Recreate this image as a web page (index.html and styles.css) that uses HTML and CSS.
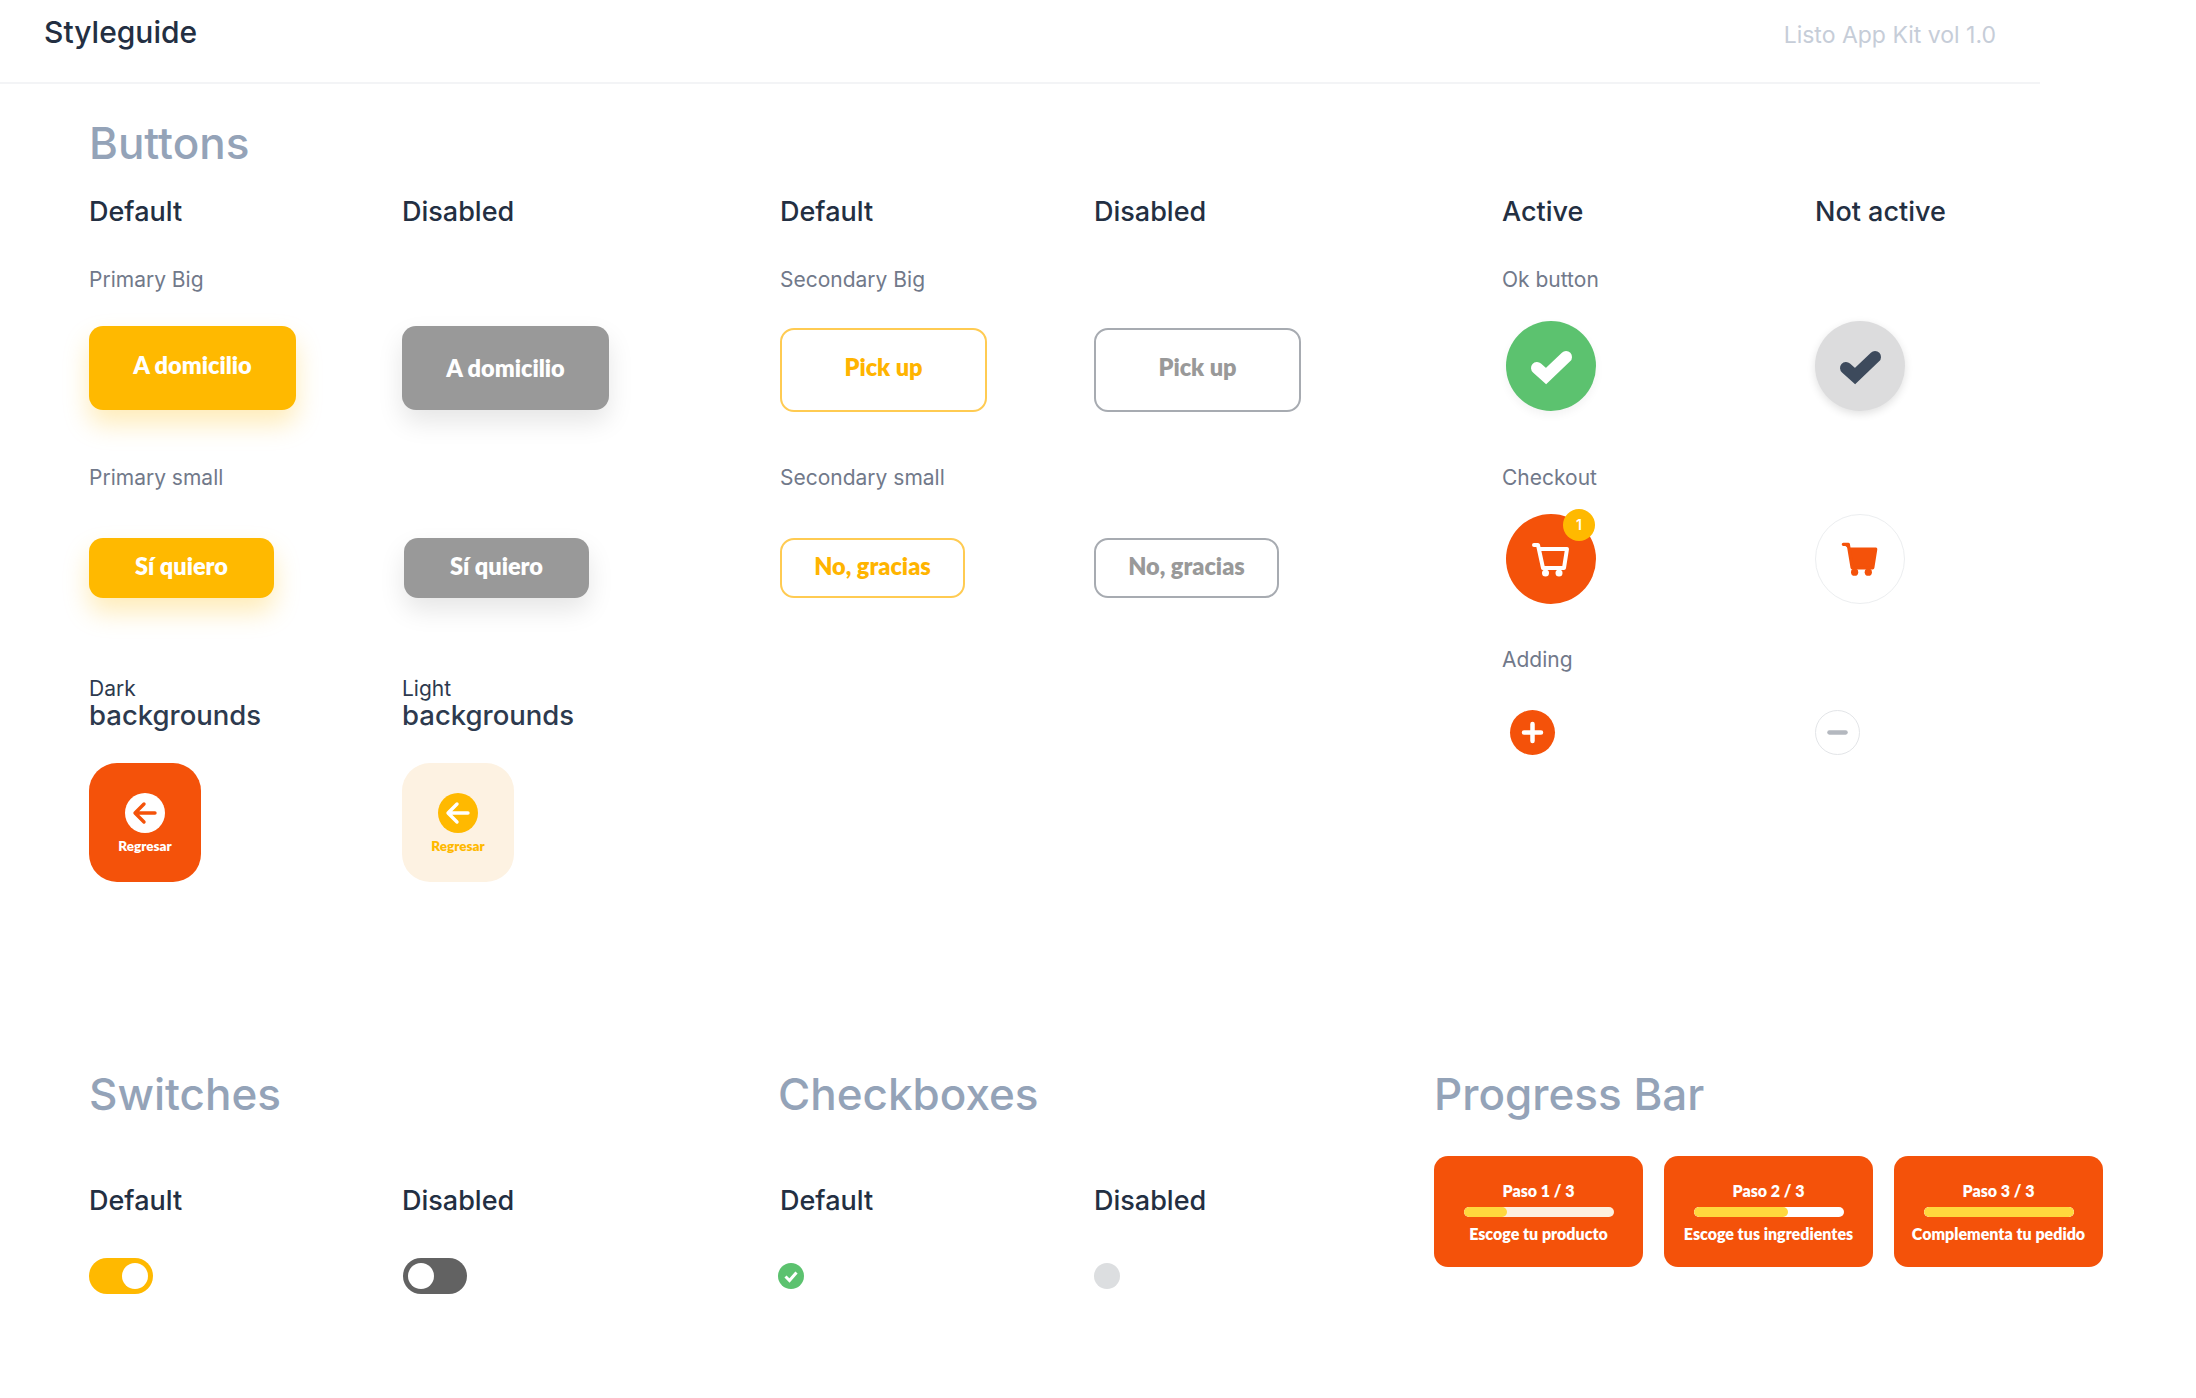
FILE: index.html
```html
<!DOCTYPE html>
<html lang="es">
<head>
<meta charset="utf-8">
<title>Styleguide</title>
<link rel="stylesheet" href="styles.css">
</head>
<body>
<header class="topbar">
  <h1 class="brand">Styleguide</h1>
  <span class="kit">Listo App Kit vol 1.0</span>
</header>
<main class="page">
  <section class="buttons">
    <h2 class="section-title">Buttons</h2>
    <div class="btn-grid">
      <div class="state">Default</div><div class="state">Disabled</div><div class="state">Default</div><div class="state">Disabled</div><div class="state">Active</div><div class="state">Not active</div>

      <div class="label">Primary Big</div><div></div><div class="label">Secondary Big</div><div></div><div class="label">Ok button</div><div></div>

      <div class="cell"><button class="btn big primary shift-up">A domicilio</button></div>
      <div class="cell"><button class="btn big grey">A domicilio</button></div>
      <div class="cell drop-2"><button class="btn big outline">Pick up</button></div>
      <div class="cell drop-2"><button class="btn big outline off">Pick up</button></div>
      <div class="cell inset-4 rise-5"><span class="round ok"><svg viewBox="0 0 90 90" class="ico"><path d="M31 47l9 8 20-19" fill="none" stroke="#fff" stroke-width="12" stroke-linecap="round" stroke-linejoin="miter"/></svg></span></div>
      <div class="cell rise-5"><span class="round nope"><svg viewBox="0 0 90 90" class="ico"><path d="M31 47l9 8 20-19" fill="none" stroke="#3d4a5c" stroke-width="12" stroke-linecap="round" stroke-linejoin="miter"/></svg></span></div>

      <div class="label">Primary small</div><div></div><div class="label">Secondary small</div><div></div><div class="label">Checkout</div><div></div>

      <div class="cell"><button class="btn small primary">Sí quiero</button></div>
      <div class="cell inset-2"><button class="btn small grey">Sí quiero</button></div>
      <div class="cell"><button class="btn small outline">No, gracias</button></div>
      <div class="cell"><button class="btn small outline off">No, gracias</button></div>
      <div class="cell inset-4 rise-24"><span class="round cart"><svg viewBox="0 0 90 90" class="ico"><path d="M28 31h4l5 23h21l3-19H33" fill="none" stroke="#fff" stroke-width="4" stroke-linecap="round" stroke-linejoin="round"/><circle cx="39.500" cy="59" r="3.500" fill="#fff"/><circle cx="53" cy="59" r="3.500" fill="#fff"/></svg><span class="badge">1</span></span></div>
      <div class="cell rise-24"><span class="round cart-off"><svg viewBox="0 0 90 90" class="ico"><path d="M28 30h5l4 24h21l3-19H34" fill="#f4520a" stroke="#f4520a" stroke-width="3.400" stroke-linecap="round" stroke-linejoin="round"/><circle cx="39.500" cy="58.500" r="3.700" fill="#f4520a"/><circle cx="53.500" cy="58.500" r="3.700" fill="#f4520a"/></svg></span></div>

      <div class="bg-head"><span>Dark</span><strong>backgrounds</strong></div>
      <div class="bg-head"><span>Light</span><strong>backgrounds</strong></div>
      <div class="spacer"></div><div class="spacer"></div>
      <div class="adding inset-label">
        <div class="label">Adding</div>
        <span class="mini add"><svg viewBox="0 0 45 45" class="ico"><path d="M22.500 14v17M14 22.500h17" fill="none" stroke="#fff" stroke-width="4.500" stroke-linecap="round"/></svg></span>
      </div>
      <div class="adding">
        <div class="label blank"></div>
        <span class="mini remove"><svg viewBox="0 0 45 45" class="ico"><path d="M14 22.500h17" fill="none" stroke="#b4b8bf" stroke-width="4.500" stroke-linecap="round"/></svg></span>
      </div>

      <div class="cell"><button class="back dark"><span class="back-dot"><svg viewBox="0 0 40 40" class="ico"><path d="M30 20H11M19 11l-9 9 9 9" fill="none" stroke="#f4520a" stroke-width="3.400" stroke-linecap="round" stroke-linejoin="round"/></svg></span>Regresar</button></div>
      <div class="cell"><button class="back light"><span class="back-dot"><svg viewBox="0 0 40 40" class="ico"><path d="M30 20H11M19 11l-9 9 9 9" fill="none" stroke="#fff" stroke-width="3.400" stroke-linecap="round" stroke-linejoin="round"/></svg></span>Regresar</button></div>
    </div>
  </section>

  <section class="lower">
    <div class="group switches">
      <h2 class="section-title">Switches</h2>
      <div class="pair">
        <div class="pair-item"><div class="state">Default</div><span class="switch on"></span></div>
        <div class="pair-item"><div class="state">Disabled</div><span class="switch dis"></span></div>
      </div>
    </div>
    <div class="group checks">
      <h2 class="section-title">Checkboxes</h2>
      <div class="pair">
        <div class="pair-item"><div class="state">Default</div><span class="check"><svg viewBox="0 0 26 26" class="ico"><path d="M7.500 13.500l4 4 7-8" fill="none" stroke="#fff" stroke-width="3"/></svg></span></div>
        <div class="pair-item"><div class="state">Disabled</div><span class="check dis"></span></div>
      </div>
    </div>
    <div class="group progress">
      <h2 class="section-title">Progress Bar</h2>
      <div class="steps">
        <div class="step"><span>Paso 1 / 3</span><div class="track pale"><div class="fill" style="width:29%"></div></div><span>Escoge tu producto</span></div>
        <div class="step"><span>Paso 2 / 3</span><div class="track"><div class="fill" style="width:63%"></div></div><span>Escoge tus ingredientes</span></div>
        <div class="step"><span>Paso 3 / 3</span><div class="track"><div class="fill" style="width:100%"></div></div><span>Complementa tu pedido</span></div>
      </div>
    </div>
  </section>
</main>
</body>
</html>
```
FILE: styles.css
```css
* { box-sizing: border-box; }
html, body { margin: 0; padding: 0; background: #fff; }
body { font-family: "Inter", "Open Sans", sans-serif; color: #2d3a4e; width: 2196px; height: 1398px; overflow: hidden; }
button { font: inherit; margin: 0; padding: 0; border: 0; cursor: default; }

.topbar { width: 2040px; height: 84px; border-bottom: 2px solid #f3f4f6; display: flex; justify-content: space-between; align-items: flex-start; padding: 15px 44px 0; }
.brand { margin: 0; font-size: 30px; line-height: 34px; font-weight: 500; color: #232f42; }
.kit { font-size: 23px; line-height: 28px; color: #c6cdd8; padding: 6px 0 0; }

.page { padding: 0 0 0 89px; }
.section-title { margin: 0; font-size: 44px; line-height: 50px; font-weight: 500; color: #94a3b8; }
.buttons .section-title { padding-top: 34px; height: 84px; }

.btn-grid { display: grid; grid-template-columns: 313px 378px 314px 408px 313px 200px; grid-template-rows: 65px 76px 122px 90px 92px 133px 119px; margin-top: 17px; }

.state { font-size: 27px; line-height: 32px; font-weight: 500; color: #232f42; padding-top: 11px; }
.label { font-size: 21px; line-height: 26px; color: #71798a; margin-top: 17px; }
.cell { display: block; }
.inset-2 { padding-left: 2px; }
.inset-4 { padding-left: 4px; }
.drop-2 { padding-top: 2px; }
.rise-5 { margin-top: -5px; }
.rise-24 { margin-top: -24px; }

.btn { display: flex; align-items: center; justify-content: center; font-family: "Lato", "Liberation Sans", sans-serif; font-weight: 800; border-radius: 14px; color: #fff; }
.big { width: 207px; height: 84px; font-size: 23.500px; }
.small { width: 185px; height: 60px; font-size: 23.500px; padding-bottom: 5px; }
.primary { background: #ffb900; box-shadow: 0 14px 26px rgba(255, 185, 0, .28); }
.grey { background: #999; box-shadow: 0 12px 26px rgba(0, 0, 0, .1); }
.shift-up { padding-bottom: 6px; }
.outline { background: #fff; border: 2px solid #ffcb52; color: #ffb400; }
.big.outline { padding-bottom: 6px; }
.outline.off { border-color: #a7abb1; color: #999; }

.round { position: relative; display: block; width: 90px; height: 90px; border-radius: 50%; }
.ico { display: block; width: 100%; height: 100%; }
.ok { background: #5cc26f; box-shadow: 0 4px 10px rgba(0,0,0,.05); }
.nope { background: #dcdcdd; box-shadow: 0 3px 8px rgba(0,0,0,.12); }
.cart { background: #f4520a; }
.cart-off { background: #fff; border: 1px solid #eceef0; }
.badge { position: absolute; left: 57px; top: -5px; width: 32px; height: 32px; border-radius: 50%; background: #ffb900; color: #fff; font-size: 14px; font-weight: 600; display: flex; align-items: center; justify-content: center; padding-bottom: 2px; }

.bg-head { display: flex; flex-direction: column; align-self: start; color: #2d3a4e; margin-top: 47px; }
.bg-head span { font-size: 21px; line-height: 24px; }
.bg-head strong { font-size: 27.500px; line-height: 28px; font-weight: 500; }

.adding { grid-row: span 2; }
.inset-label .mini { margin-left: 8px; }
.adding .mini { margin-top: 37px; }
.adding .blank { height: 26px; }

.back { display: flex; flex-direction: column; align-items: center; justify-content: flex-start; width: 112px; height: 119px; border-radius: 28px; padding-top: 30px; font-family: "Lato", sans-serif; font-size: 13.500px; line-height: 18px; font-weight: 800; }
.back-dot { display: block; width: 40px; height: 40px; border-radius: 50%; margin-bottom: 4px; }
.back.dark { background: #f4520a; color: #fff; }
.dark .back-dot { background: #fff; }
.back.light { background: #fdf2e2; color: #ffb900; }
.light .back-dot { background: #ffb900; }

.mini { display: block; width: 45px; height: 45px; border-radius: 50%; }
.add { background: #f4520a; }
.remove { background: #fff; border: 1px solid #e3e5e8; }

.lower { display: flex; margin-top: 187px; }
.group { flex: none; }
.switches { width: 689px; }
.checks { width: 656px; }
.pair { display: flex; margin-top: 66px; }
.pair-item { width: 313px; }
.pair-item .state { padding-top: 0; height: 73px; }
.switches .pair-item + .pair-item .switch { margin-left: 1px; }
.checks .pair-item { width: 314px; padding-left: 2px; }

.switch { position: relative; display: block; width: 64px; height: 36px; border-radius: 18px; }
.switch::after { content: ""; position: absolute; top: 5px; width: 26px; height: 26px; border-radius: 50%; background: #fff; }
.switch.on { background: #ffb900; }
.switch.on::after { right: 5px; }
.switch.dis { background: #626262; }
.switch.dis::after { left: 5px; }

.check { display: block; width: 26px; height: 26px; margin: 5px 0 0 -2px; border-radius: 50%; background: #5cc26f; }
.check.dis { background: #dcdee0; margin-left: 0; }

.steps { display: flex; gap: 21px; margin-top: 37px; }
.step { width: 209px; height: 111px; border-radius: 14px; background: #f4520a; color: #fff; font-family: "Lato", sans-serif; font-size: 16px; font-weight: 800; display: flex; flex-direction: column; align-items: center; justify-content: flex-start; padding-top: 26px; }
.step > span { line-height: 18px; white-space: nowrap; }
.track { width: 150px; height: 10px; border-radius: 5px; background: #fff; margin: 7px 0 8px; overflow: hidden; }
.track.pale { background: #fdf0df; }
.fill { height: 100%; background: #ffd83d; border-radius: 5px; }
```
